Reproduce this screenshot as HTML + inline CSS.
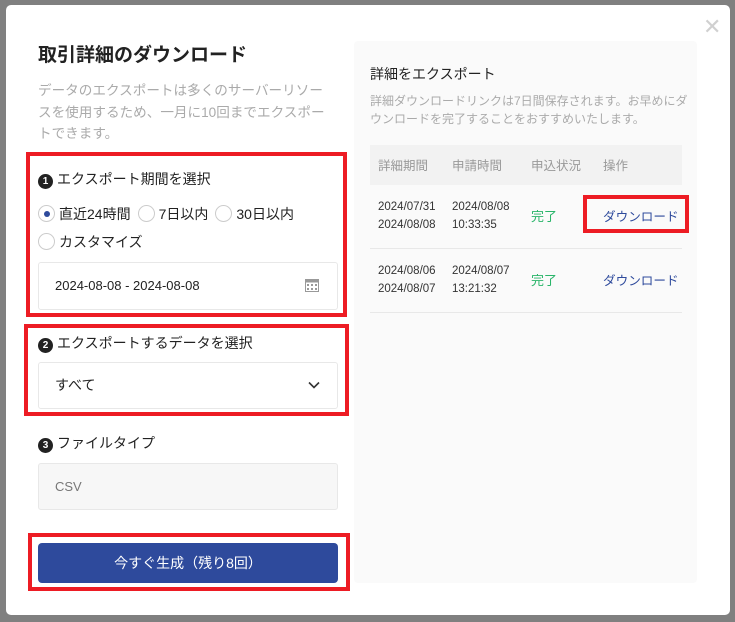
<!DOCTYPE html>
<html><head><meta charset="utf-8"><style>
*{box-sizing:border-box;margin:0;padding:0}
body{width:735px;height:622px;background:#808080;font-family:"Liberation Sans","Noto Sans CJK JP",sans-serif;position:relative;overflow:hidden;color:#222}
.a{position:absolute}
.modal{left:6px;top:5px;width:724px;height:610px;background:#fff;border-radius:5px}
.red{border:4px solid #ed1c24}
.num{display:inline-block;width:15px;height:15px;border-radius:50%;background:#222;color:#fff;font-size:10px;font-weight:bold;text-align:center;line-height:15px;vertical-align:0px;margin-right:4px}
.lab{font-size:14px;color:#222}
.box{border:1px solid #e8e8e8;border-radius:3px;background:#fff}
.radio{display:inline-block;width:17px;height:17px;border:1px solid #ccc;border-radius:50%;vertical-align:-3px;margin-right:4px;position:relative;background:#fff}
.radio.on::after{content:"";position:absolute;left:4.5px;top:4.5px;width:6px;height:6px;border-radius:50%;background:#2e4a9c}
.t{font-size:12px;color:#333;line-height:18px}
</style></head><body>
<div class="a modal"></div>
<div class="a" style="left:703px;top:16px;font-size:22px;color:#d0d0d0;line-height:22px">✕</div>
<div class="a" style="left:38px;top:40px;font-size:19px;font-weight:bold;color:#222">取引詳細のダウンロード</div>
<div class="a" style="left:38px;top:80px;width:292px;font-size:13.6px;line-height:21.5px;color:#aaa">データのエクスポートは多くのサーバーリソースを使用するため、一月に10回までエクスポートできます。</div>

<div class="a red" style="left:26px;top:152px;width:321px;height:165px"></div>
<div class="a lab" style="left:38px;top:169px"><span class="num">1</span>エクスポート期間を選択</div>
<div class="a lab" style="left:38px;top:204px"><span class="radio on"></span>直近24時間<span class="radio" style="margin-left:7px"></span>7日以内<span class="radio" style="margin-left:7px"></span>30日以内</div>
<div class="a lab" style="left:38px;top:232px"><span class="radio"></span>カスタマイズ</div>
<div class="a box" style="left:38px;top:262px;width:300px;height:48px"></div>
<div class="a" style="left:55px;top:278px;font-size:13px;color:#222">2024-08-08 - 2024-08-08</div>
<svg class="a" style="left:305px;top:278px" width="14" height="14" viewBox="0 0 14 14"><rect x="0.5" y="1.5" width="13" height="12" fill="none" stroke="#999"/><rect x="0.5" y="1.5" width="13" height="3" fill="#999"/><g fill="#999"><rect x="2" y="6" width="2" height="2"/><rect x="6" y="6" width="2" height="2"/><rect x="10" y="6" width="2" height="2"/><rect x="2" y="10" width="2" height="2"/><rect x="6" y="10" width="2" height="2"/><rect x="10" y="10" width="2" height="2"/></g></svg>

<div class="a red" style="left:24px;top:324px;width:325px;height:92px"></div>
<div class="a lab" style="left:38px;top:333px"><span class="num">2</span>エクスポートするデータを選択</div>
<div class="a box" style="left:38px;top:362px;width:300px;height:47px"></div>
<div class="a" style="left:55px;top:375px;font-size:14px">すべて</div>
<svg class="a" style="left:308px;top:381px" width="12" height="8" viewBox="0 0 12 8"><path d="M1 1.5l5 5 5-5" fill="none" stroke="#333" stroke-width="1.6"/></svg>

<div class="a lab" style="left:38px;top:433px"><span class="num">3</span>ファイルタイプ</div>
<div class="a box" style="left:38px;top:463px;width:300px;height:47px;background:#f7f7f7"></div>
<div class="a" style="left:55px;top:479px;font-size:13px;color:#777">CSV</div>

<div class="a red" style="left:28px;top:533px;width:322px;height:58px"></div>
<div class="a" style="left:38px;top:543px;width:300px;height:40px;background:#2e4a9c;border-radius:4px;color:#fff;font-size:14px;text-align:center;line-height:40px">今すぐ生成（残り8回）</div>

<div class="a" style="left:354px;top:41px;width:343px;height:542px;background:#fafafa;border-radius:4px"></div>
<div class="a" style="left:370px;top:64px;font-size:14px;color:#222">詳細をエクスポート</div>
<div class="a" style="left:370px;top:92px;width:318px;font-size:12px;line-height:18px;color:#aaa">詳細ダウンロードリンクは7日間保存されます。お早めにダウンロードを完了することをおすすめいたします。</div>
<div class="a" style="left:370px;top:145px;width:312px;height:40px;background:#f2f2f2"></div>
<div class="a" style="left:378px;top:155px;font-size:12.5px;color:#999">詳細期間</div>
<div class="a" style="left:452px;top:155px;font-size:12.5px;color:#999">申請時間</div>
<div class="a" style="left:531px;top:155px;font-size:12.5px;color:#999">申込状況</div>
<div class="a" style="left:603px;top:155px;font-size:12.5px;color:#999">操作</div>
<div class="a" style="left:370px;top:248px;width:312px;height:1px;background:#e8e8e8"></div>
<div class="a" style="left:370px;top:312px;width:312px;height:1px;background:#e8e8e8"></div>
<div class="a t" style="left:378px;top:198px;font-size:11.5px">2024/07/31<br>2024/08/08</div>
<div class="a t" style="left:452px;top:198px;font-size:11.5px">2024/08/08<br>10:33:35</div>
<div class="a" style="left:531px;top:206px;font-size:13px;color:#2ab56a">完了</div>
<div class="a" style="left:603px;top:206px;font-size:12.6px;color:#2e4a9c">ダウンロード</div>
<div class="a red" style="left:583px;top:195px;width:106px;height:38px"></div>
<div class="a t" style="left:378px;top:262px;font-size:11.5px">2024/08/06<br>2024/08/07</div>
<div class="a t" style="left:452px;top:262px;font-size:11.5px">2024/08/07<br>13:21:32</div>
<div class="a" style="left:531px;top:270px;font-size:13px;color:#2ab56a">完了</div>
<div class="a" style="left:603px;top:270px;font-size:12.6px;color:#2e4a9c">ダウンロード</div>
</body></html>
